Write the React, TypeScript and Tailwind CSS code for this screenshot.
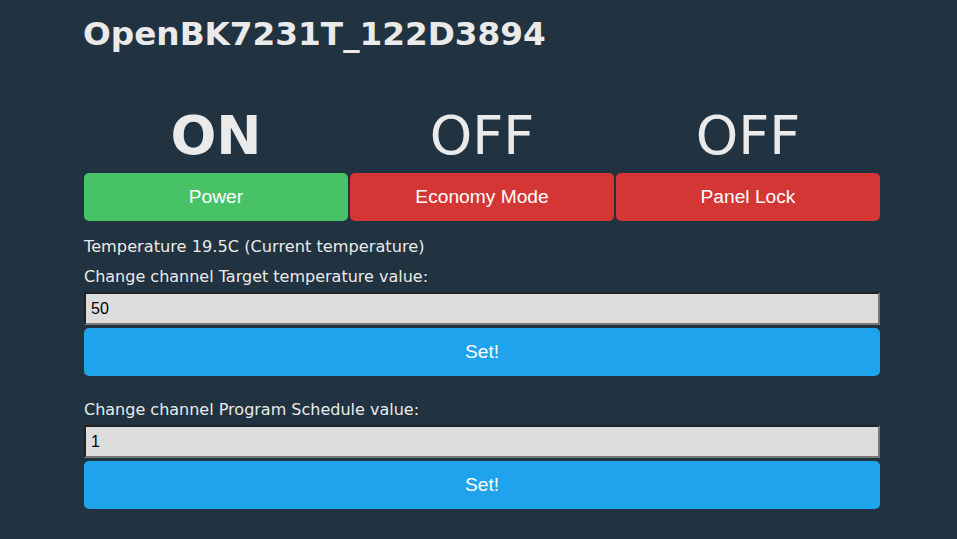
import React from "react";

function Col({ state, bold, label, color }: { state: string; bold?: boolean; label: string; color: string }) {
  return (
    <div className="flex flex-col items-center">
      <div className={`text-[54px] leading-[62px] text-[#eaeaea] font-['DejaVu_Sans',Verdana,sans-serif] ${bold ? "font-bold" : "font-normal"}`}>
        {state}
      </div>
      <button className={`mt-[6px] w-full h-[48px] rounded-[5px] text-white text-[19.2px] font-['Liberation_Sans',Arial,sans-serif] ${color}`}>
        {label}
      </button>
    </div>
  );
}

function InputBlock({ label, value, gap }: { label: string; value: string; gap: string }) {
  return (
    <div className="flex flex-col">
      <div className={`text-[16px] leading-[22px] text-[#eaeaea] ${gap}`}>{label}</div>
      <input
        readOnly
        value={value}
        className="h-[33px] w-full bg-[#dddddd] text-black text-[16px] px-[5px] border-2 border-t-[#222] border-l-[#222] border-r-[#777] border-b-[#777] outline-none font-['Liberation_Sans',Arial,sans-serif]"
      />
      <button className="mt-[3px] h-[48px] w-full rounded-[5px] bg-[#1fa3ec] text-white text-[19.2px] font-['Liberation_Sans',Arial,sans-serif]">
        Set!
      </button>
    </div>
  );
}

export default function App() {
  return (
    <div className="min-h-[539px] w-full bg-[#213340] text-[#eaeaea] font-['DejaVu_Sans',Verdana,sans-serif]">
      <div className="w-[796px] ml-[84px]">
        <h2 className="text-[32.7px] font-bold leading-[38px] pt-[15px] -ml-[1px]">OpenBK7231T_122D3894</h2>
        <div className="grid grid-cols-3 gap-[2px] mt-[52px]">
          <Col state="ON" bold label="Power" color="bg-[#47c266]" />
          <Col state="OFF" label="Economy Mode" color="bg-[#d43535]" />
          <Col state="OFF" label="Panel Lock" color="bg-[#d43535]" />
        </div>
        <div className="mt-[15px] text-[16.2px] leading-[22px]">Temperature 19.5C (Current temperature)</div>
        <div className="mt-[8px]">
          <InputBlock label="Change channel Target temperature value:" value="50" gap="mb-[4px]" />
        </div>
        <div className="mt-[23px]">
          <InputBlock label="Change channel Program Schedule value:" value="1" gap="mb-[4px]" />
        </div>
      </div>
    </div>
  );
}
